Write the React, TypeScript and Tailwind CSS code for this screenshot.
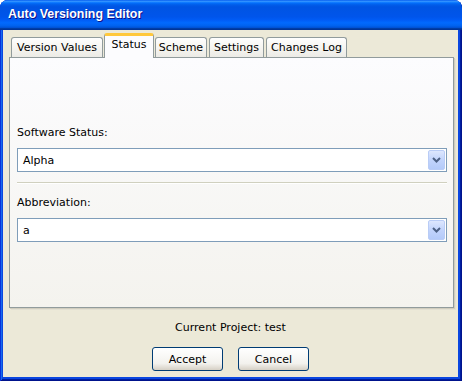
import React from "react";

const Chevron = () => (
  <svg width="9" height="6" viewBox="0 0 9 6">
    <path d="M1 1 L4.5 4.5 L8 1" fill="none" stroke="#4D6185" strokeWidth="2" />
  </svg>
);

const Combo = ({ value }: { value: string }) => (
  <div className="h-[24px] border border-[#7F9DB9] bg-white flex items-center justify-between pl-[5px] pr-[1px]">
    <span>{value}</span>
    <div className="w-[17px] h-[20px] rounded-[2px] border border-[#B9CCF6] bg-[linear-gradient(to_bottom,#DDE7FE,#C2D4FC_50%,#B4CAF9)] flex items-center justify-center">
      <Chevron />
    </div>
  </div>
);

const Tab = ({ label, w, ml }: { label: string; w: string; ml: string }) => (
  <div
    className={`${w} ${ml} h-[20px] border border-b-0 border-[#919B9C] rounded-t-[3px] bg-[linear-gradient(to_bottom,#FEFEFE,#F4F3EE_60%,#ECEBE6)] flex items-center justify-center`}
  >
    {label}
  </div>
);

export default function App() {
  return (
    <div className="w-[464px] h-[382px] bg-white font-['DejaVu_Sans',sans-serif] text-[11px] leading-[13px] text-black">
      <div className="w-[462px] h-[381px] rounded-t-[8px] overflow-hidden flex flex-col bg-[#0A46E0] shadow-[inset_1px_0_0_#0831D9,inset_-1px_-1px_0_#00138C,inset_2px_0_0_#166AEE,inset_-2px_-2px_0_#001EA0]">
        <div className="h-[30px] shrink-0 bg-[linear-gradient(to_bottom,#0058EE_0%,#3593FF_4%,#288EFF_6%,#127DFF_8%,#036FFC_10%,#0262EE_14%,#0057E5_20%,#0054E3_24%,#0055EB_56%,#005BF5_66%,#026AFE_76%,#0062EF_86%,#0052D6_92%,#0040AB_94%,#003092_100%)] flex items-center pl-[8px] pb-[1px]">
          <span className="font-['Liberation_Sans',sans-serif] font-bold text-[12.4px] text-white [text-shadow:1px_1px_0_#0F1089]">
            Auto Versioning Editor
          </span>
        </div>
        <div className="flex-1 ml-[3px] mr-[4px] mb-[4px] bg-[#ECE9D8] flex flex-col pl-[6px] pr-[4px] pt-[3px]">
          <div className="h-[24px] flex items-end pl-[2px]">
            <Tab label="Version Values" w="w-[92px]" ml="ml-0" />
            <div className="relative top-[1px] z-10 ml-[1px] w-[50px] h-[25px] border-x border-[#919B9C] rounded-t-[3px] bg-[#FCFCFE] border-t-[3px] border-t-[#FFC83C] shadow-[inset_0_0_0_0_transparent] flex items-start justify-center pt-[2px] overflow-hidden">
              <div className="absolute top-[-3px] left-0 right-0 h-[1px] bg-[#E68B2C]" />
              Status
            </div>
            <Tab label="Scheme" w="w-[52px]" ml="ml-[1px]" />
            <Tab label="Settings" w="w-[55px]" ml="ml-[2px]" />
            <Tab label="Changes Log" w="w-[81px]" ml="ml-[2px]" />
          </div>
          <div className="h-[251px] border border-[#919B9C] bg-[linear-gradient(to_bottom,#FCFCFE,#F4F3EE)] shadow-[1px_1px_0_#D0CDBE,2px_2px_0_#E3E0D2] flex flex-col pl-[7px] pr-[6px] pt-[68px]">
            <div>Software Status:</div>
            <div className="mt-[9px]">
              <Combo value="Alpha" />
            </div>
            <div className="mt-[10px] h-[2px] border-t border-[#D0D0BF] border-b border-b-white" />
            <div className="mt-[12px]">Abbreviation:</div>
            <div className="mt-[9px]">
              <Combo value="a" />
            </div>
          </div>
          <div className="mt-[13px] text-center pr-[2px]">Current Project: test</div>
          <div className="mt-[13px] flex justify-center gap-[15px] pr-[2px]">
            <button className="w-[71px] h-[24px] rounded-[3px] border border-[#003C74] bg-[linear-gradient(to_bottom,#FFFFFF,#F3F2EE_70%,#D6D0C5)]">
              Accept
            </button>
            <button className="w-[71px] h-[24px] rounded-[3px] border border-[#003C74] bg-[linear-gradient(to_bottom,#FFFFFF,#F3F2EE_70%,#D6D0C5)]">
              Cancel
            </button>
          </div>
        </div>
      </div>
    </div>
  );
}
